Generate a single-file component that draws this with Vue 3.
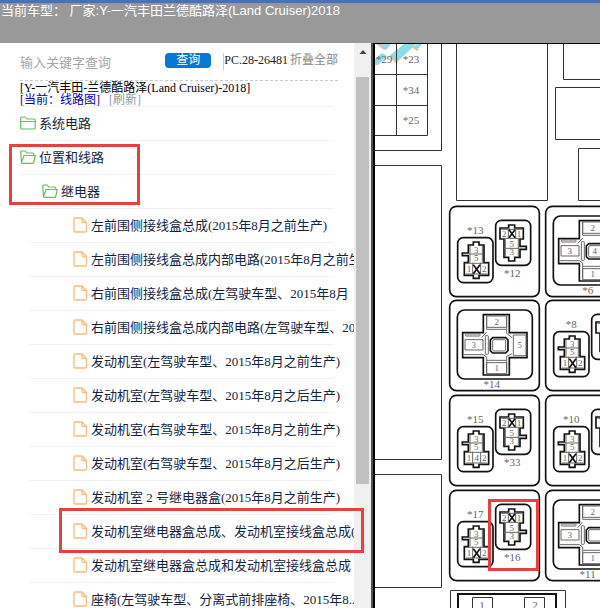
<style>
body {
  margin: 0;
  background: #fff;
}
</style>

<style scoped>
.app {
  display: flex;
  flex-direction: column;
  height: 100vh;
  overflow: hidden;
  font-family: "Liberation Serif", "Noto Sans CJK SC", serif;
  font-size: 13px;
}

.header {
  flex: none;
  box-sizing: border-box;
  height: 43px;
  padding: 0 1px;
  border-top: 3px solid #4a70b5;
  background: linear-gradient(#8795ad, #999 2px);
  color: #fff;
  font-family: "Liberation Sans", "Noto Sans CJK SC", sans-serif;
  line-height: 16px;
  white-space: pre;
}

.workspace {
  position: relative;
  display: flex;
  flex: 1;
  min-height: 0;
}

.sidebar {
  flex: 0 0 354px;
  overflow: hidden;
}

/* Buscador */
.search {
  display: flex;
  align-items: flex-start;
  box-sizing: border-box;
  height: 38px;
  margin: 0 16px 0 20px;
  padding-top: 10px;
  border-bottom: 1px dashed #ccc;
  font-size: 12px;
  line-height: 14px;
}

.search input {
  flex: 1;
  min-width: 0;
  height: 20px;
  padding: 0;
  border: none;
  outline: none;
  font: 13px/20px "Liberation Sans", "Noto Sans CJK SC", sans-serif;
}

.search input::placeholder {
  color: #a6a6a6;
}

.search button {
  width: 46px;
  height: 15px;
  margin-right: 12px;
  padding: 0;
  border: none;
  border-radius: 4px;
  background: #0a78d0;
  color: #fff;
  font: 12px/15px "Liberation Sans", "Noto Sans CJK SC", sans-serif;
}

.code {
  height: 17px;
  border-left: 1px solid #ccc;
  color: #222;
}

.collapse {
  margin-left: 2px;
  color: #888;
  text-decoration: none;
}

.info {
  margin: 0 20px;
  padding-top: 1px;
  border-bottom: 1px solid #f4f4f4;
  color: #000;
  font-size: 12px;
  line-height: 12px;
  white-space: nowrap;
}

.info a {
  margin-right: 9px;
  color: #0000b8;
  text-decoration: none;
}

.info a.refresh {
  color: #999;
}

/* Árbol */
.tree {
  margin: 0;
  padding: 0 20px;
  list-style: none;
}

.tree li {
  box-sizing: border-box;
  height: 34px;
  border-bottom: 1px solid #f2f2f2;
  white-space: nowrap;
}

.tree a {
  display: flex;
  align-items: center;
  gap: 3px;
  box-sizing: border-box;
  height: 33px;
  padding-bottom: 2px;
  color: #14243f;
  text-decoration: none;
}

.tree svg {
  flex: none;
}

.level-1 a {
  padding-left: 22px;
}

.tree .level-2 {
  margin-left: 9px;
}

.level-2 a {
  padding-left: 44px;
}

/* Barra de desplazamiento */
.scrollbar {
  display: flex;
  flex: 0 0 17px;
  flex-direction: column;
  align-items: center;
  background: #f0f0f0;
}

.scrollbar svg {
  flex: none;
  margin: 6px 0 22px;
}

.thumb {
  width: 13px;
  height: 72%;
  background: #c0c0c0;
}

.splitter {
  flex: 0 0 2px;
  border-right: 2px solid #000;
  background: #505050;
}

.viewer {
  flex: 1;
  min-width: 0;
  overflow: hidden;
  border-top: 1px solid #000;
}

.diagram {
  display: block;
  width: 100%;
  height: 100%;
  fill: none;
  stroke: #333;
}

.diagram text {
  fill: #666;
  stroke: none;
  font-size: 11px;
  text-anchor: middle;
}

.diagram .cell text {
  font-size: 33px;
}

.diagram .cell .pin {
  fill: #666;
  font-size: 27px;
}

.thick {
  stroke: #111;
  stroke-width: 5;
}

.thin {
  stroke: #666;
  stroke-width: 3;
}

.mark {
  position: absolute;
  box-sizing: border-box;
  border: 3px solid #e83f3f;
  pointer-events: none;
}

.mark-folder {
  left: 9px;
  top: 101px;
  width: 131px;
  height: 61px;
}

.mark-file {
  left: 59px;
  top: 465px;
  width: 305px;
  height: 45px;
}
</style>

<template>
  <div class="app">
    <header class="header">当前车型： 厂家:Y-一汽丰田兰德酷路泽(Land Cruiser)2018</header>

    <main class="workspace">
      <aside class="sidebar">
        <form class="search" @submit.prevent>
          <input v-model="keyword" type="text" placeholder="输入关键字查询" aria-label="输入关键字查询" />
          <button type="submit">查询</button>
          <span class="code">PC.28-26481</span>
          <a class="collapse" href="#">折叠全部</a>
        </form>

        <div class="info">
          <div>[Y-一汽丰田-兰德酷路泽(Land Cruiser)-2018]</div>
          <a href="#">[当前：线路图]</a><a href="#" class="refresh">[刷新]</a>
        </div>

        <ul class="tree">
          <li v-for="(item, i) in items" :key="i" :class="'level-' + item.level">
            <a href="#">
              <svg v-if="item.icon === 'file'" width="15" height="16" viewBox="0 0 15 16" fill="none" stroke="#f5bd80" stroke-width="1.3">
                <path d="M2 1h7l4.500 4.500V14q0 1-1 1H2q-1 0-1-1V2q0-1 1-1zM9 1v3.500q0 1 1 1h3.500" />
              </svg>
              <svg v-else width="16" height="16" viewBox="0 0 16 16" fill="none" stroke="#68bd68" stroke-width="1.200">
                <path v-if="item.icon === 'open'" d="M1.500 13.500L.7 3q0-1 1-1h3.600l1.500 2h6q1 0 1 1v1.500M1.500 13.500L4 6.500h11.300l-1.600 7q-.2.800-1 .8H2.300q-.8 0-.8-.8z" />
                <path v-else d="M.7 13V3q0-1 1-1h3.800l1.500 2h7.200q1 0 1 1v8q0 1-1 1H1.700q-1 0-1-1zM.7 6.500h14.500" />
              </svg>
              <span>{{ item.text }}</span>
            </a>
          </li>
        </ul>
      </aside>

      <div class="scrollbar" aria-hidden="true">
        <svg width="8" height="6" viewBox="0 0 8 6"><path d="M4 1l3.500 4h-7z" fill="#444" /></svg>
        <div class="thumb"></div>
      </div>
      <div class="splitter"></div>

      <section class="viewer">
        <svg class="diagram" viewBox="375 44 225 564" preserveAspectRatio="xMinYMin slice">
          <defs>
            <g id="relay-up">
              <rect class="thick" x="53" y="113" width="106" height="135" rx="17" />
              <path class="thick" d="M85 135h15v-9h17v9h15v53h14v38h-29v9h-17v-9H73v-38h12v-21H67v-8h18z" />
              <path class="thin" d="M90 138v50M127 138v50M88 162h41M78 190h64M78 222h64M98 188v38M122 188v38" />
            </g>
            <g id="relay-down">
              <rect class="thick" x="167" y="61" width="105" height="135" rx="17" />
              <path class="thick" d="M180 84h26v-9h18v9h26v33h-10v22h19v9h-19v24h-16v11h-18v-11h-14v-55h-12z" />
              <path class="thin" d="M196 117v53M235 117v53M192 145h46M184 88h62M184 115h62M205 84v33M227 84v33" />
            </g>
            <g id="relay-big">
              <rect class="thick" x="52" y="48" width="225" height="207" rx="22" />
              <path class="thick" d="M130 62h78v54h53v75h-53v52h-78v-52H68v-75h62z" />
              <path class="thin" d="M140 66h60v34h-60zM140 206h60v33h-60zM75 137h54v31H75zM220 123h38v62h-38zM140 66v40h60V66M140 239v-40h60v40M125 131l15-17M200 106v12l16 13M200 199v-12l16-8M140 199v-10l-10-7H72" />
              <rect class="thin" x="76" y="120" width="44" height="6" rx="2" />
              <rect class="thin" x="136" y="125" width="9" height="56" rx="2" />
              <path class="thick" d="M158 131h39l7 7v32l-7 7h-39l-7-7v-32z" />
              <rect class="thin" x="158" y="137" width="39" height="34" rx="4" />
            </g>
          </defs>

          <!-- Marca de agua -->
          <g stroke="none">
            <path fill="#8edce5" d="M379 44h12l-5 6zM389 56l15-12h12l-20 19zM375 59l7-6 5 3-9 9h-3zM417 44h5l-4 5-6-1z" />
            <path fill="#d8c5ad" d="M376 44l8 6 2-1-6-5zM389 57l7 6 2-1-7-6zM410 46l7 5 2-1-6-5z" />
          </g>
          <path d="M396.500 44v91M427.500 44v91.500H375M375 74.500h52M375 105.500h52" />
          <path d="M441.500 44v106.500H375M375 165.500h66.500v294H375M375 474.500h66.500v113H375" />
          <path d="M456.500 44v156.500h91V44M600 79.500h-36.500V44M600 87.500h-44.500v52H600M600 148.500h-21.500v52H600" />
          <text x="384" y="63">*29</text>
          <text x="411" y="63">*23</text>
          <text x="411" y="94">*34</text>
          <text x="411" y="124">*25</text>

          <!-- Celdas dibujadas a escala 3:1 -->
          <g
            v-for="cell in cells"
            :key="cell.x + '-' + cell.y"
            class="cell"
            :transform="`translate(${cell.x} ${cell.y}) scale(.3333)`"
          >
            <rect class="thick" x="29" y="19" width="269" height="271" rx="20" />
            <template v-if="cell.big">
              <use href="#relay-big" />
              <text class="pin" x="170" y="92">2</text>
              <text class="pin" x="101" y="162">3</text>
              <text v-if="cell.center" class="pin" x="176" y="163">4</text>
              <text v-else-if="cell.x === 440" class="pin" x="239" y="163">5</text>
              <text class="pin" x="170" y="232">1</text>
              <text x="155" y="282">{{ cell.big }}</text>
            </template>
            <template v-else>
              <use href="#relay-up" />
              <use href="#relay-down" />
              <text x="106" y="101">{{ cell.left }}</text>
              <text class="pin" x="109" y="159">3</text>
              <text class="pin" x="109" y="184">5</text>
              <text class="pin" x="87" y="216">1</text>
              <text class="pin" x="133" y="216">2</text>
              <text v-if="cell.four" class="pin" x="110" y="216">4</text>
              <path v-else class="thick" d="M100 194l20 27M120 194l-20 27" />
              <path class="thick" d="M207 89l18 24M225 89l-18 24" />
              <text v-if="cell.x === 440" class="pin" x="193" y="110">2</text>
              <template v-if="cell.right">
                <text x="217" y="232">{{ cell.right }}</text>
                <text class="pin" x="237" y="110">1</text>
                <text class="pin" x="215" y="141">5</text>
                <text class="pin" x="215" y="166">3</text>
              </template>
            </template>
          </g>

          <path d="M450.500 608v-17.500h115V608M472.500 608v-10.500h20V608M524.500 608v-10.500h20V608" />
          <path d="M458 608v-14h98v14" stroke="#111" stroke-width="2" />
          <text x="482" y="609">1</text>
          <text x="535" y="609">2</text>
          <rect x="489.500" y="500.500" width="48" height="69" stroke="#e83f3f" stroke-width="3" />
        </svg>
      </section>

      <div class="mark mark-folder"></div>
      <div class="mark mark-file"></div>
    </main>
  </div>
</template>

<script setup>
import { ref } from "vue";

const keyword = ref("");

const files = [
  "左前围侧接线盒总成(2015年8月之前生产)",
  "左前围侧接线盒总成内部电路(2015年8月之前生产)",
  "右前围侧接线盒总成(左驾驶车型、2015年8月",
  "右前围侧接线盒总成内部电路(左驾驶车型、2015年8月",
  "发动机室(左驾驶车型、2015年8月之前生产)",
  "发动机室(左驾驶车型、2015年8月之后生产)",
  "发动机室(右驾驶车型、2015年8月之前生产)",
  "发动机室(右驾驶车型、2015年8月之后生产)",
  "发动机室 2 号继电器盒(2015年8月之前生产)",
  "发动机室继电器盒总成、发动机室接线盒总成(2015年8月",
  "发动机室继电器盒总成和发动机室接线盒总成",
  "座椅(左驾驶车型、分离式前排座椅、2015年8...",
];

const items = [
  { level: 0, icon: "closed", text: "系统电路" },
  { level: 0, icon: "open", text: "位置和线路" },
  { level: 1, icon: "open", text: "继电器" },
  ...files.map((text) => ({ level: 2, icon: "file", text })),
];

const cells = [
  { x: 440, y: 200, left: "*13", right: "*12" },
  { x: 536, y: 200, big: "*6", center: true },
  { x: 440, y: 294, big: "*14" },
  { x: 536, y: 294, left: "*8" },
  { x: 440, y: 389, left: "*15", right: "*33", four: true },
  { x: 536, y: 389, left: "*10" },
  { x: 440, y: 484, left: "*17", right: "*16" },
  { x: 536, y: 484, big: "*11" },
];
</script>
